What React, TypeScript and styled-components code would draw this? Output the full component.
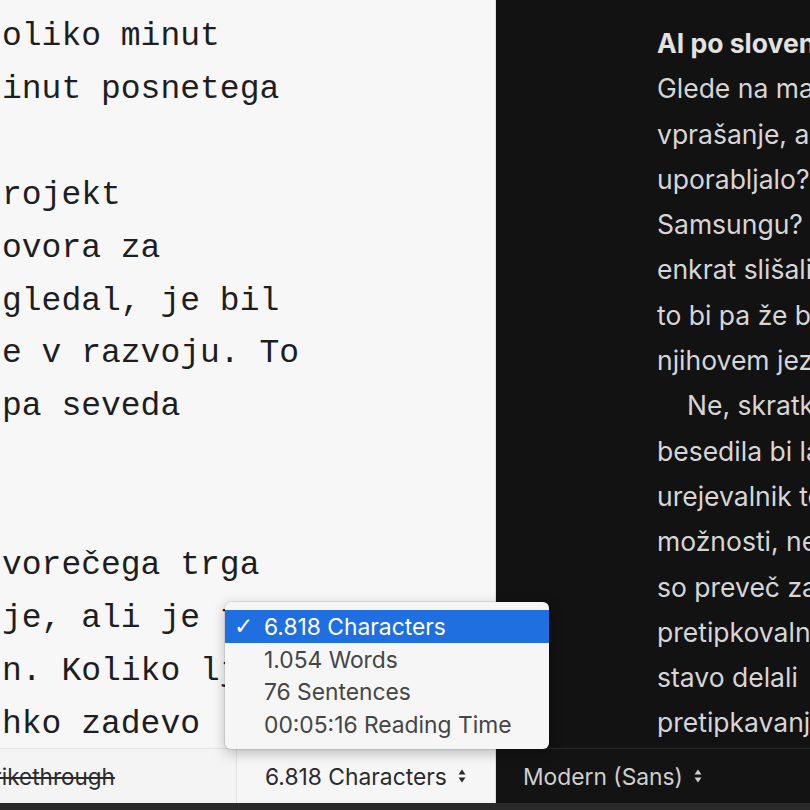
import styled, { createGlobalStyle } from 'styled-components';

const GlobalStyle = createGlobalStyle`
    html, body {
        margin: 0;
        padding: 0;
        width: 810px;
        height: 810px;
        overflow: hidden;
        background: #121212;
    }
`;

const editorLines = [
    'oliko minut',
    'inut posnetega',
    '',
    'rojekt',
    'ovora za',
    'gledal, je bil',
    'e v razvoju. To',
    'pa seveda',
    '',
    '',
    'vorečega trga',
    'je, ali je to',
    'n. Koliko lj',
    'hko zadevo',
];

const previewLines: { text: string; indent?: boolean }[] = [
    { text: 'Glede na majhnost' },
    { text: 'vprašanje, ali bi' },
    { text: 'uporabljalo? In' },
    { text: 'Samsungu? Ali' },
    { text: 'enkrat slišali' },
    { text: 'to bi pa že bilo' },
    { text: 'njihovem jeziku' },
    { text: 'Ne, skratka', indent: true },
    { text: 'besedila bi lahko' },
    { text: 'urejevalnik teksta' },
    { text: 'možnosti, ne' },
    { text: 'so preveč zahtevne' },
    { text: 'pretipkovalnik' },
    { text: 'stavo delali' },
    { text: 'pretipkavanje' },
];

const counts = ['6.818 Characters', '1.054 Words', '76 Sentences', '00:05:16 Reading Time'];

const Stepper = ({ color }: { color: string }) => (
    <svg width="8" height="14" viewBox="0 0 8 14">
        <path d="M4 0.5 L7.5 5.5 L0.5 5.5 Z" fill={color} />
        <path d="M4 13.5 L7.5 8.5 L0.5 8.5 Z" fill={color} />
    </svg>
);

const App = () => {
    return (
        <Window>
            <GlobalStyle />
            <Panes>
                <LightPane>
                    <Editor>
                        {editorLines.map((line, i) => (
                            <EditorLine key={i}>{line || '\u00a0'}</EditorLine>
                        ))}
                    </Editor>
                    <LightFooter>
                        <FormatCell>
                            <Struck>rikethrough</Struck>
                        </FormatCell>
                        <CountCell>
                            <FooterLabel>6.818 Characters</FooterLabel>
                            <Stepper color="#2b2b2b" />
                        </CountCell>
                    </LightFooter>
                </LightPane>
                <DarkPane>
                    <Preview>
                        <Heading>AI po slovensko</Heading>
                        {previewLines.map((line, i) => (
                            <PreviewLine key={i} $indent={line.indent}>
                                {line.text}
                            </PreviewLine>
                        ))}
                    </Preview>
                    <DarkFooter>
                        <FontLabel>Modern (Sans)</FontLabel>
                        <Stepper color="#cfcfcf" />
                    </DarkFooter>
                </DarkPane>
            </Panes>
            <BottomStrip />
            <Menu>
                {counts.map((item, i) => (
                    <MenuItem key={item} $selected={i === 0}>
                        <Check>{i === 0 ? '✓' : ''}</Check>
                        {item}
                    </MenuItem>
                ))}
            </Menu>
        </Window>
    );
};

export default App;

const Window = styled.div`
    position: relative;
    width: 810px;
    height: 810px;
    display: flex;
    flex-direction: column;
    overflow: hidden;
`;

const Panes = styled.div`
    flex: 1;
    display: flex;
    min-height: 0;
`;

const LightPane = styled.div`
    width: 496px;
    display: flex;
    flex-direction: column;
    background: #f7f7f7;
    border-right: 1px solid #dcdcdc;
    box-sizing: border-box;
`;

const Editor = styled.div`
    flex: 1;
    padding: 11px 0 0 2px;
    overflow: hidden;
`;

const EditorLine = styled.div`
    font-family: 'Liberation Mono', 'DejaVu Sans Mono', monospace;
    font-size: 33px;
    line-height: 52.9px;
    color: #1e1e1e;
    white-space: nowrap;
`;

const LightFooter = styled.div`
    height: 55px;
    display: flex;
    border-top: 1px solid #e4e4e4;
    box-sizing: border-box;
    background: #f4f4f4;
`;

const FormatCell = styled.div`
    width: 236px;
    display: flex;
    align-items: center;
    overflow: hidden;
    border-right: 1px solid #e2e2e2;
`;

const Struck = styled.span`
    font-family: Inter, 'Liberation Sans', sans-serif;
    font-size: 22.5px;
    color: #2b2b2b;
    text-decoration: line-through;
    margin-left: -7px;
    white-space: nowrap;
`;

const CountCell = styled.div`
    flex: 1;
    display: flex;
    align-items: center;
    gap: 11px;
    padding-left: 28px;
    background: #f6f6f6;
`;

const FooterLabel = styled.span`
    font-family: Inter, 'Liberation Sans', sans-serif;
    font-size: 22.8px;
    color: #2b2b2b;
`;

const DarkPane = styled.div`
    flex: 1;
    display: flex;
    flex-direction: column;
    background: #121212;
    min-width: 0;
`;

const Preview = styled.div`
    flex: 1;
    padding: 21px 0 0 161px;
    overflow: hidden;
`;

const Heading = styled.div`
    font-family: Inter, 'Open Sans', sans-serif;
    font-weight: 700;
    font-size: 26.5px;
    line-height: 45.3px;
    color: #e2e2e2;
    white-space: nowrap;
`;

const PreviewLine = styled.div<{ $indent?: boolean }>`
    font-family: Inter, 'Open Sans', sans-serif;
    font-size: 26.5px;
    line-height: 45.3px;
    color: #d6d6d6;
    white-space: nowrap;
    padding-left: ${(p) => (p.$indent ? '30px' : '0')};
`;

const DarkFooter = styled.div`
    height: 55px;
    display: flex;
    align-items: center;
    gap: 11px;
    padding-left: 27px;
    border-top: 1px solid #262626;
    box-sizing: border-box;
    background: #131313;
`;

const FontLabel = styled.span`
    font-family: Inter, 'Liberation Sans', sans-serif;
    font-size: 22.8px;
    color: #cfcfcf;
`;

const BottomStrip = styled.div`
    height: 7px;
    background: #2a2a2a;
`;

const Menu = styled.div`
    position: absolute;
    left: 225px;
    top: 602px;
    width: 324px;
    padding: 8px 0 8px;
    box-sizing: border-box;
    background: #f6f6f6;
    border-radius: 6px;
    box-shadow: 0 0 0 1px rgba(0, 0, 0, 0.08), 0 4px 14px rgba(0, 0, 0, 0.25);
`;

const MenuItem = styled.div<{ $selected?: boolean }>`
    height: 32.7px;
    display: flex;
    align-items: center;
    font-family: Inter, 'Liberation Sans', sans-serif;
    font-size: 22.8px;
    color: ${(p) => (p.$selected ? '#ffffff' : '#454545')};
    background: ${(p) => (p.$selected ? '#1f6fe0' : 'transparent')};
`;

const Check = styled.span`
    width: 39px;
    padding-left: 9px;
    box-sizing: border-box;
    font-family: 'DejaVu Sans', sans-serif;
    font-weight: 700;
    font-size: 23px;
`;
